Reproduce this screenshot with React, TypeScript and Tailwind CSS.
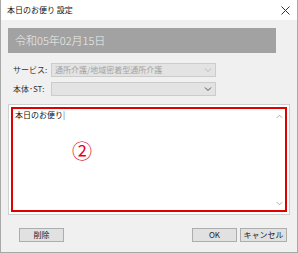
import React from 'react';

const font = { fontFamily: '"Noto Sans CJK JP", "Noto Sans", sans-serif' };

function Chevron({ up = false, color = '#606060', size = 8 }: { up?: boolean; color?: string; size?: number }) {
    return (
        <svg width={size} height={size} viewBox="0 0 8 8" fill="none">
            <path d={up ? 'M1 5.5 L4 2.5 L7 5.5' : 'M1 2.5 L4 5.5 L7 2.5'} stroke={color} strokeWidth="1" />
        </svg>
    );
}

function Select({ value, disabled }: { value: string; disabled?: boolean }) {
    return (
        <div className="flex h-[14px] w-[165px] items-center justify-between border border-[#cccccc] bg-[#e3e3e3] pl-[3px] pr-[3px]">
            <span className="whitespace-nowrap text-[8px] leading-none text-[#a3a3a3]">{value}</span>
            <Chevron color={disabled ? '#b8b8b8' : '#505050'} />
        </div>
    );
}

function Button({ label, className }: { label: string; className?: string }) {
    return (
        <button className={`flex h-[14px] items-center justify-center border border-[#adadad] bg-[#e1e1e1] text-[8px] leading-none text-[#222] ${className ?? ''}`}>
            {label}
        </button>
    );
}

export default function App() {
    return (
        <div className="flex h-[253px] w-[298px] flex-col border-x border-b border-[#a8a8a8] bg-[#f0f0f0]" style={font}>
            {/* Title bar */}
            <div className="flex h-[20px] items-center justify-between bg-white pl-[6px] pr-[7px]">
                <span className="text-[8px] leading-none text-[#111]">本日のお便り 設定</span>
                <svg width="9" height="9" viewBox="0 0 9 9">
                    <path d="M0.5 0.5 L8.5 8.5 M8.5 0.5 L0.5 8.5" stroke="#333" strokeWidth="1" />
                </svg>
            </div>

            <div className="flex flex-col pl-[7px] pr-[7px] pt-[8px]">
                {/* Date banner */}
                <div className="flex h-[25px] w-[268px] items-center bg-[#a2a2a2] pl-[7px]">
                    <span className="text-[11px] font-light leading-none text-[#ededed]">令和05年02月15日</span>
                </div>

                <div className="mt-[10px] flex items-center">
                    <span className="w-[43px] pl-[5px] text-[8px] leading-none text-[#333]">サービス:</span>
                    <Select value="通所介護/地域密着型通所介護" disabled />
                </div>
                <div className="mt-[5px] flex items-center">
                    <span className="w-[43px] pl-[5px] text-[8px] leading-none text-[#333]">本体･ST:</span>
                    <Select value="" />
                </div>

                {/* Text area */}
                <div className="mt-[8px] h-[111px] w-[282px] border border-[#d0d0d0] bg-white p-[2px]">
                    <div className="relative flex h-full w-full border-2 border-[#e00000]">
                        <div className="flex-1 pl-[2px] pt-[1px] text-[8px] leading-[10px] text-[#111]">
                            本日のお便り<span className="font-light">|</span>
                        </div>
                        <div className="flex w-[12px] flex-col items-center justify-between pb-[3px] pt-[4px]">
                            <Chevron up color="#a0a0a0" size={7} />
                            <Chevron color="#a0a0a0" size={7} />
                        </div>
                        <span className="absolute left-[59px] top-[32px] text-[20px] leading-none text-[#e60012]">②</span>
                    </div>
                </div>

                {/* Buttons */}
                <div className="mt-[13px] flex items-center">
                    <Button label="削除" className="ml-[11px] w-[45px]" />
                    <div className="flex-1" />
                    <Button label="OK" className="w-[45px]" />
                    <Button label="キャンセル" className="ml-[3px] mr-[3px] w-[47px]" />
                </div>
            </div>
        </div>
    );
}
